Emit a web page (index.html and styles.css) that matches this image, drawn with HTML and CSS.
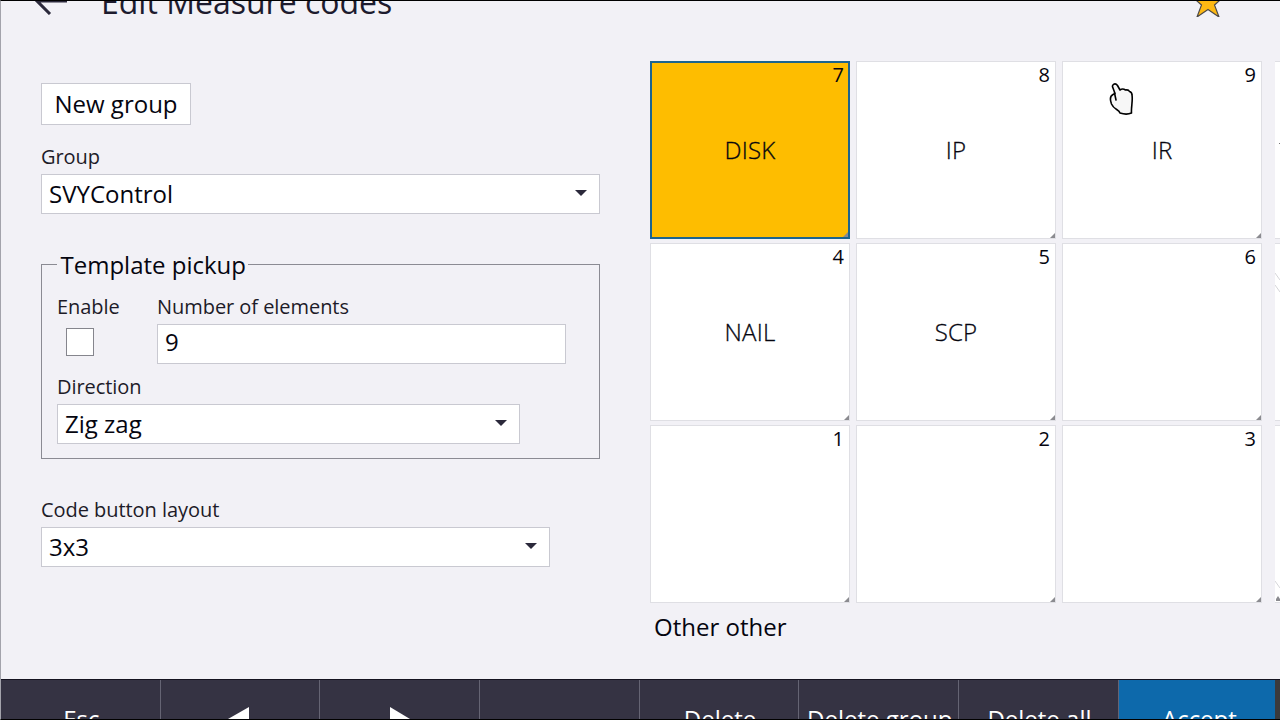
FILE: index.html
```html
<!DOCTYPE html>
<html lang="en">
<head>
    <meta charset="UTF-8">
    <meta name="viewport" content="width=device-width, initial-scale=1.0">
    <title>Edit Measure codes</title>
    <link rel="stylesheet" href="styles.css">
</head>
<body>

    <div class="screen">
        <header class="header">
            <svg class="back" width="34" height="28" viewBox="0 0 34 28">
                <path d="M33 14H3M16 1L3 14L16 27" fill="none" stroke="#2b293b" stroke-width="3"/>
            </svg>
            <h1 class="title">Edit Measure codes</h1>
            <svg class="star" width="30" height="30" viewBox="0 0 30 30">
                <path d="M15 1L18.500 11.300H29L21.500 18L26 30L15 22.500L4 30L8.500 18L1 11.300H11.500Z" fill="#fdb813" stroke="#4d4a48" stroke-width="1.200"/>
            </svg>
        </header>

        <main class="content">
            <form class="settings">
                <button type="button" class="new-group">New group</button>

                <label class="label group-label">Group</label>
                <div class="select">SVYControl<span class="arrow"></span></div>

                <fieldset class="template">
                    <legend>Template pickup</legend>
                    <div class="row">
                        <div class="enable">
                            <label class="label">Enable</label>
                            <span class="checkbox"></span>
                        </div>
                        <div class="elements">
                            <label class="label">Number of elements</label>
                            <div class="input">9</div>
                        </div>
                    </div>
                    <label class="label direction-label">Direction</label>
                    <div class="select direction">Zig zag<span class="arrow"></span></div>
                </fieldset>

                <label class="label">Code button layout</label>
                <div class="select layout">3x3<span class="arrow"></span></div>
            </form>

            <section class="codes">
                <div class="pages">
                    <div class="grid">
                        <div class="code selected"><span class="num">7</span>DISK</div>
                        <div class="code"><span class="num">8</span>IP</div>
                        <div class="code"><span class="num">9</span>IR</div>
                        <div class="code"><span class="num">4</span>NAIL</div>
                        <div class="code"><span class="num">5</span>SCP</div>
                        <div class="code"><span class="num">6</span></div>
                        <div class="code"><span class="num">1</span></div>
                        <div class="code"><span class="num">2</span></div>
                        <div class="code"><span class="num">3</span></div>
                    </div>
                    <!-- edge of the next page of codes -->
                    <div class="next-page">
                        <div class="peek">
                            <svg width="5" height="176" viewBox="0 0 5 176"><path d="M4 81.5h1" stroke="#777"/></svg>
                        </div>
                        <div class="peek">
                            <svg width="5" height="176" viewBox="0 0 5 176"><path d="M0 29L5 36M0 41L5 48" fill="none" stroke="#d5d5d9"/></svg>
                        </div>
                        <div class="peek">
                            <svg width="5" height="176" viewBox="0 0 5 176"><path d="M0 155L5 162" fill="none" stroke="#d5d5d9"/><path d="M1 175V173L3 170L5 173V175Z" fill="#8b8b90"/></svg>
                        </div>
                    </div>
                </div>
                <p class="page-name">Other other</p>
            </section>
        </main>

        <footer class="footer">
            <div class="key">Esc</div>
            <div class="key"><svg width="24" height="24" viewBox="0 0 24 24"><path d="M21 0V24L0 12Z" fill="#fff"/></svg></div>
            <div class="key"><svg width="20" height="24" viewBox="0 0 20 24"><path d="M0 0V24L20 12Z" fill="#fff"/></svg></div>
            <div class="key"></div>
            <div class="key">Delete</div>
            <div class="key">Delete group</div>
            <div class="key">Delete all</div>
            <div class="key accept">Accept</div>
            <div class="edge"></div>
        </footer>

        <svg class="cursor" width="26" height="36" viewBox="0 0 26 36">
            <path d="M4 6C2 3 6 0 8.500 3.500L11 8C13 6.500 15 7 16.500 8C18.500 7.500 20 8.500 20.500 9.500C22.500 10 23 11.500 23 13C24 19 22 25 22.500 31C18 33 14 32 11 31C10 27 5 28 2.500 22C1 18 1 14 4 12.500L6 11.500Z" fill="#f7f7f7" stroke="#000" stroke-width="1.600" stroke-linejoin="round"/>
            <path d="M5.500 11L7 18" fill="none" stroke="#000" stroke-width="1.600" stroke-linecap="round"/>
        </svg>
    </div>

</body>
</html>
```
FILE: styles.css
```css
* {
    box-sizing: border-box;
}
body {
    margin: 0;
    font-family: "Open Sans", "Noto Sans", sans-serif;
    font-size: 24px;
    color: #05050f;
    background: #000;
}
.screen {
    position: relative;
    display: flex;
    flex-direction: column;
    width: 1280px;
    height: 720px;
    overflow: hidden;
    background: #f2f1f6;
    border-top: 1px solid #000;
    border-bottom: 1px solid #000;
    border-left: 1px solid #a3a3ab;
}

/* Header, scrolled partly out of view */
.header {
    display: flex;
    align-items: center;
    height: 60px;
    margin-top: -29px;
    padding: 0 57px 0 33px;
}
.back {
    margin-bottom: 2px;
}
.title {
    flex: 1;
    margin: 0 0 2px 33px;
    font-size: 32px;
    font-weight: 400;
    color: #1d1b2e;
}

.content {
    display: flex;
    flex: 1;
}
.settings {
    width: 559px;
    margin: 51px 50px 0 40px;
}
.new-group {
    display: block;
    width: 150px;
    height: 42px;
    padding: 0 0 2px;
    font: inherit;
    color: inherit;
    background: #fff;
    border: 1px solid #c9c9d1;
}
.label {
    display: block;
    height: 26px;
    font-size: 20px;
    letter-spacing: -0.05px;
    line-height: 26px;
    color: #1d1b28;
}
.group-label {
    margin-top: 19px;
}
.select,
.input {
    display: flex;
    align-items: center;
    justify-content: space-between;
    height: 40px;
    padding: 0 12px 2px 7px;
    background: #fff;
    border: 1px solid #c9c9d1;
}
.input {
    padding-bottom: 5px;
}
.label + .select,
.label + .input {
    margin-top: 4px;
}
.arrow {
    border: 6px solid transparent;
    border-top: 6px solid #2b293b;
    border-bottom: 0;
}
.template {
    width: 559px;
    height: 211px;
    margin: 34px 0 38px;
    padding: 0 0 0 15px;
    border: 1px solid #8b8b93;
}
.template legend {
    padding: 1px 2px 0 3.5px;
    line-height: 32px;
}
.row {
    display: flex;
    margin-top: 13px;
}
.enable {
    width: 100px;
}
.checkbox {
    display: block;
    width: 28px;
    height: 28px;
    margin: 8px 0 0 9px;
    background: #fff;
    border: 1px solid #85858d;
}
.elements {
    width: 409px;
}
.direction-label {
    margin-top: 10px;
}
.direction {
    width: 463px;
}
.layout {
    width: 509px;
}

/* Code buttons */
.codes {
    margin-top: 29px;
}
.pages {
    display: flex;
    gap: 13px;
}
.grid {
    display: grid;
    grid-template-columns: repeat(3, 200px);
    grid-auto-rows: 178px;
    gap: 4px 6px;
}
.code {
    position: relative;
    display: flex;
    align-items: center;
    justify-content: center;
    padding-bottom: 2px;
    font-weight: 300;
    letter-spacing: 0.2px;
    -webkit-text-stroke: 0.3px #05050f;
    background: #fff;
    border: 1px solid #dfdfe4;
}
.code::after {
    content: "";
    position: absolute;
    right: 0;
    bottom: 0;
    border-left: 5px solid transparent;
    border-bottom: 5px solid #8b8b90;
}
.code.selected {
    background: #febd00;
    border: 2px solid #1c648e;
}
.num {
    position: absolute;
    top: 0;
    right: 5px;
    font-size: 20px;
    font-weight: 400;
    line-height: 26px;
    letter-spacing: 0;
    -webkit-text-stroke: 0;
}
.selected .num {
    top: -1px;
    right: 4px;
}
.next-page {
    display: grid;
    grid-auto-rows: 178px;
    gap: 4px;
}
.peek {
    width: 5px;
    background: #fff;
    border-top: 1px solid #dfdfe4;
    border-bottom: 1px solid #dfdfe4;
}
.peek svg {
    display: block;
}
.page-name {
    margin: 7px 0 0 4px;
    line-height: 33px;
}

/* Function keys, cut off by the bottom edge */
.footer {
    display: flex;
    height: 40px;
    overflow: hidden;
    border-top: 1px solid #15131f;
}
.key {
    display: flex;
    flex: none;
    align-items: center;
    justify-content: center;
    width: 159.7px;
    height: 76px;
    padding-left: 2px;
    color: #fff;
    white-space: nowrap;
    background: #353343;
    border-right: 1px solid #656473;
}
.key svg {
    margin: 2px 2px 0 0;
}
.key.accept {
    flex: 1;
    padding-left: 5px;
    background: #0d69ab;
    border-right: 0;
}
.edge {
    width: 5px;
    height: 78px;
    background: #3a3a3c;
}

.cursor {
    position: absolute;
    left: 1108px;
    top: 81px;
}
```
